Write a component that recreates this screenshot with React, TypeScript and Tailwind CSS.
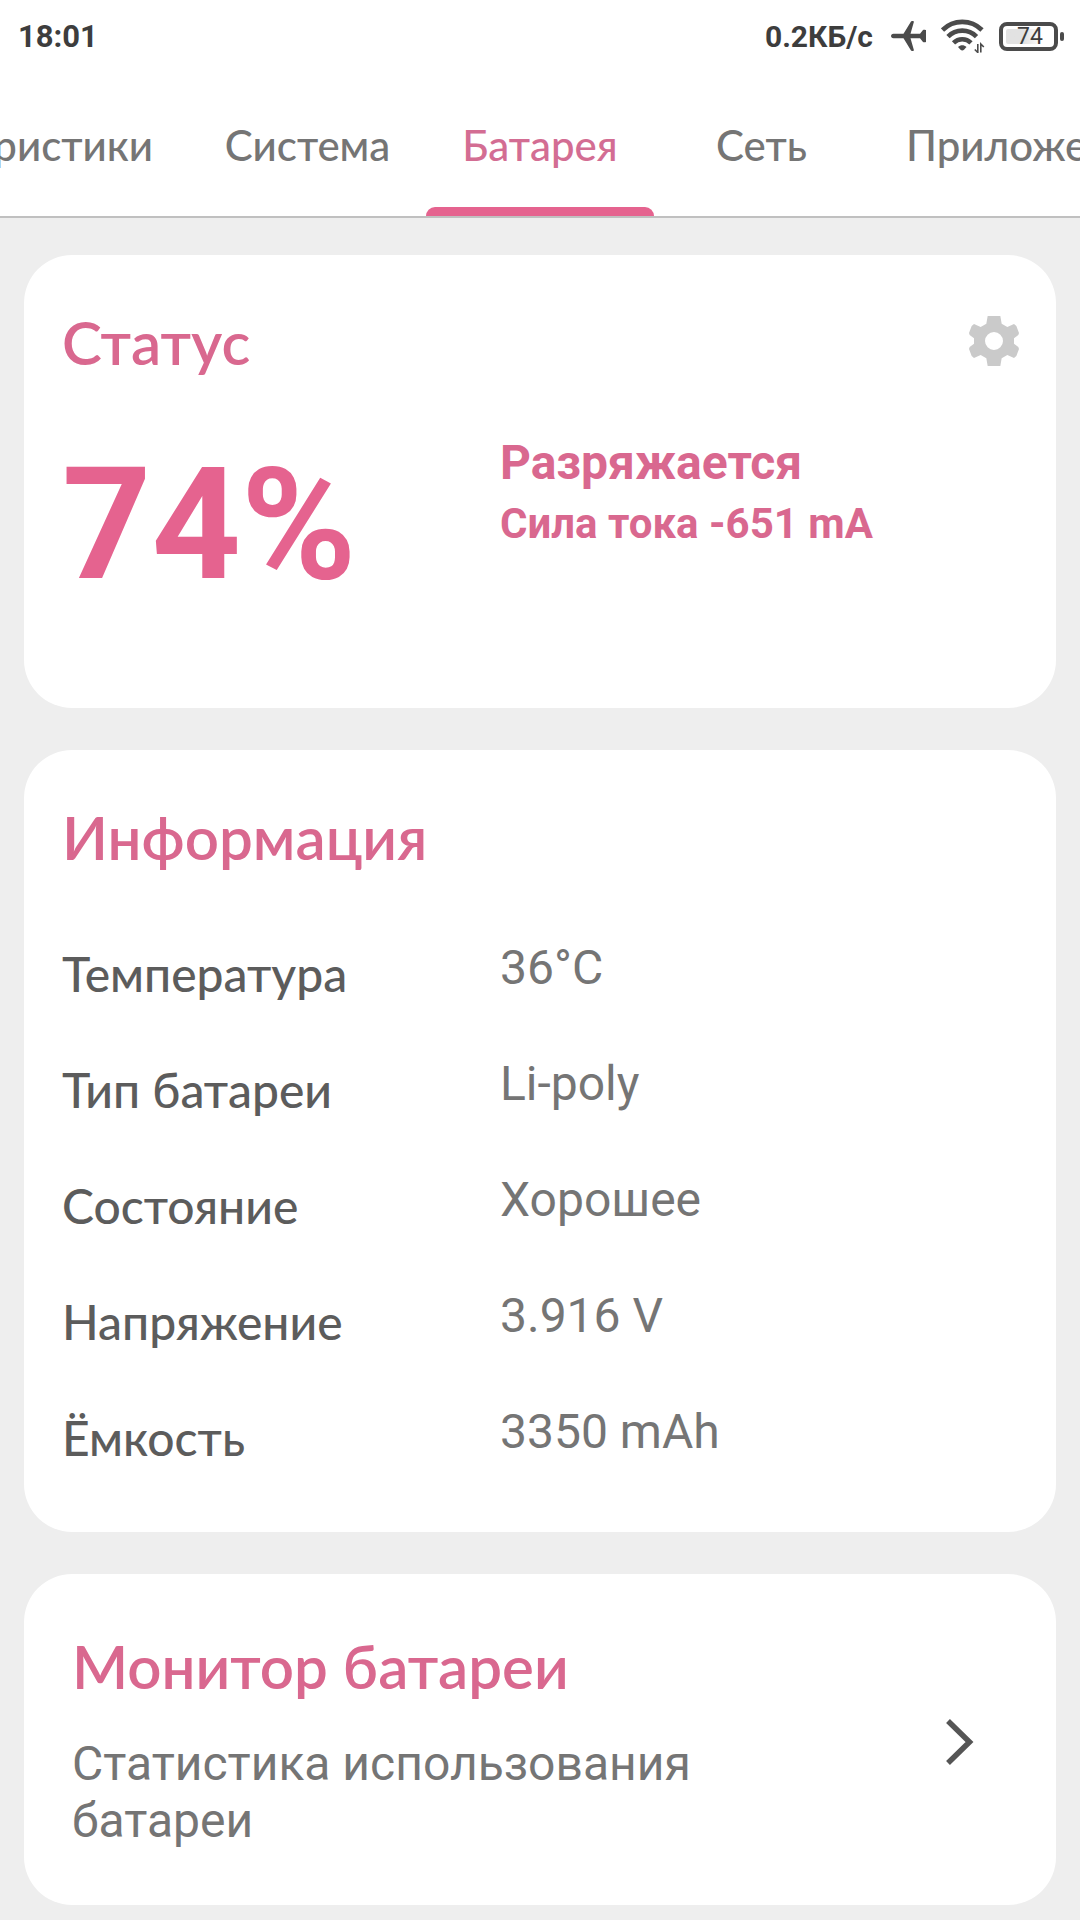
import React from 'react';

const tabs = [
  { label: 'Характеристики', className: 'w-[389px] -ml-[200px] text-[#757575]' },
  { label: 'Система', className: 'w-[237px] text-[#757575]' },
  { label: 'Батарея', className: 'w-[228px] text-[#d36d93]' },
  { label: 'Сеть', className: 'w-[215px] text-[#757575]' },
  { label: 'Приложения', className: 'w-[324px] text-[#757575]' },
];

const info = [
  { label: 'Температура', value: '36°C' },
  { label: 'Тип батареи', value: 'Li-poly' },
  { label: 'Состояние', value: 'Хорошее' },
  { label: 'Напряжение', value: '3.916 V' },
  { label: 'Ёмкость', value: '3350 mAh' },
];

function AirplaneIcon() {
  return (
    <svg viewBox="0 0 35 30" className="h-[30px] w-[35px]" fill="#4b4b4b">
      <path d="M2.5 12.7h10L20 .5c.5-.7 2-.7 3 0l-3.500 12.200h9.500l3-3.700c.5-.5 2.800-.5 3 .2v11.600c-.2.7-2.500.7-3 .2l-3-3.700h-9.500L23 29.500c-1 .7-2.500.7-3 0l-7.500-12.200h-10C-.8 17.300-.8 12.700 2.500 12.700z" />
    </svg>
  );
}

function WifiIcon() {
  return (
    <svg viewBox="0 0 44 34" className="h-[34px] w-[44px]" fill="none" stroke="#4b4b4b">
      <g strokeWidth="4.6">
        <path d="M1.5 11a28 28 0 0 1 39.5 0" />
        <path d="M7 17.600a20 20 0 0 1 28.500 0" />
        <path d="M12.500 23.800a12.500 12.500 0 0 1 17.500 0" />
      </g>
      <path d="M17 28c2.500-2.500 6-2.500 8.500 0l-2.500 2.800c-1 .9-2.500.9-3.500 0z" fill="#4b4b4b" stroke="none" />
      <path d="M36.800 25v8.500l-3-3M39.800 33.500V25l3 3" strokeWidth="1.600" />
    </svg>
  );
}

function GearIcon() {
  return (
    <svg viewBox="0 0 180 180" className="mt-[5px] size-[60px]" fill="#cacaca" fillRule="evenodd">
      <path d="M71 15h38l4 23 17 10 20-9 7 6 8 21-2 6-13 10v16l13 10 2 6-8 21-7 6-20-9-17 10-4 23H71l-4-23-17-10-20 9-7-6-8-21 2-6 13-10V82L17 72l-2-6 8-21 7-6 20 9 17-10zM90 63a27 27 0 1 0 0 54a27 27 0 1 0 0-54z" />
    </svg>
  );
}

function BatteryIcon() {
  return (
    <div className="flex items-center gap-[2px]">
      <div className="flex h-[29px] w-[59px] items-center justify-center rounded-[8px] border-[4px] border-[#4b4b4b] p-[3px]">
        <span className="flex h-full w-full items-center justify-center rounded-[2px] bg-linear-to-r from-[#e2e2e2] from-40% to-white to-80% pl-[3px] text-[23px] leading-none font-normal text-[#3d3d3d]">
          74
        </span>
      </div>
      <div className="h-[9px] w-[4px] rounded-[2px] bg-[#4b4b4b]" />
    </div>
  );
}

function StatusBar() {
  return (
    <div className="flex h-[72px] items-center justify-between pr-[16px] pl-[18px] font-['Roboto',sans-serif] font-bold text-[#3d3d3d]">
      <span className="mt-[2px] text-[31px]">18:01</span>
      <div className="flex items-center">
        <span className="mr-[18px] text-[30px]">0.2КБ/с</span>
        <AirplaneIcon />
        <div className="mr-[14px] ml-[15px]">
          <WifiIcon />
        </div>
        <BatteryIcon />
      </div>
    </div>
  );
}

function TabBar() {
  return (
    <nav className="flex h-[146px] overflow-hidden border-b-2 border-[#c0c0c0] text-[42px] font-medium">
      {tabs.map((tab) => (
        <div key={tab.label} className={`flex shrink-0 flex-col items-center ${tab.className}`}>
          <span className="mt-[48px] leading-[50px]">{tab.label}</span>
          {tab.label === 'Батарея' && <div className="mt-auto h-[9px] w-full rounded-t-[9px] bg-[#e5638f]" />}
        </div>
      ))}
    </nav>
  );
}

function CardTitle({ children }: { children: React.ReactNode }) {
  return <h2 className="text-[60px] leading-[72px] font-semibold text-[#d9688f]">{children}</h2>;
}

function StatusCard() {
  return (
    <section className="h-[453px] rounded-[48px] bg-white pt-[51px] pr-[32px] pl-[38px]">
      <div className="flex items-start justify-between">
        <CardTitle>Статус</CardTitle>
        <GearIcon />
      </div>
      <div className="flex font-['Roboto',sans-serif] font-bold">
        <div className="w-[438px] pt-[55px] text-[156px] leading-[183px] text-[#e5638f]">74%</div>
        <div className="pt-[57px] text-[#d9688f]">
          <p className="text-[48px] leading-[56px]">Разряжается</p>
          <p className="mt-[8px] text-[42px] leading-[50px]">Сила тока -651 mA</p>
        </div>
      </div>
    </section>
  );
}

function InfoCard() {
  return (
    <section className="mt-[42px] h-[782px] rounded-[48px] bg-white pt-[51px] pl-[38px]">
      <CardTitle>Информация</CardTitle>
      <dl className="mt-[67px] text-[48px] leading-[56px]">
        {info.map((row) => (
          <div key={row.label} className="flex h-[116px]">
            <dt className="w-[438px] pt-[6px] font-medium text-[#5c5c5c]">{row.label}</dt>
            <dd className="font-['Roboto',sans-serif] text-[#757575]">{row.value}</dd>
          </div>
        ))}
      </dl>
    </section>
  );
}

function MonitorCard() {
  return (
    <section className="mt-[42px] flex h-[331px] items-center justify-between rounded-[48px] bg-white pr-[82px] pl-[48px]">
      <div>
        <CardTitle>Монитор батареи</CardTitle>
        <p className="mt-[33px] w-[660px] font-['Roboto',sans-serif] text-[48px] leading-[57px] text-[#757575]">
          Статистика использования батареи
        </p>
      </div>
      <svg viewBox="0 0 28 48" className="mt-[4px] h-[48px] w-[28px]" fill="none" stroke="#555555" strokeWidth="5.5">
        <path d="M2 3l21.5 21L2 45" />
      </svg>
    </section>
  );
}

export default function App() {
  return (
    <div className="h-[1920px] w-[1080px] overflow-hidden bg-[#eeeeee] font-['Lato',sans-serif]">
      <header className="bg-white">
        <StatusBar />
        <TabBar />
      </header>
      <main className="px-[24px] pt-[37px]">
        <StatusCard />
        <InfoCard />
        <MonitorCard />
      </main>
    </div>
  );
}
